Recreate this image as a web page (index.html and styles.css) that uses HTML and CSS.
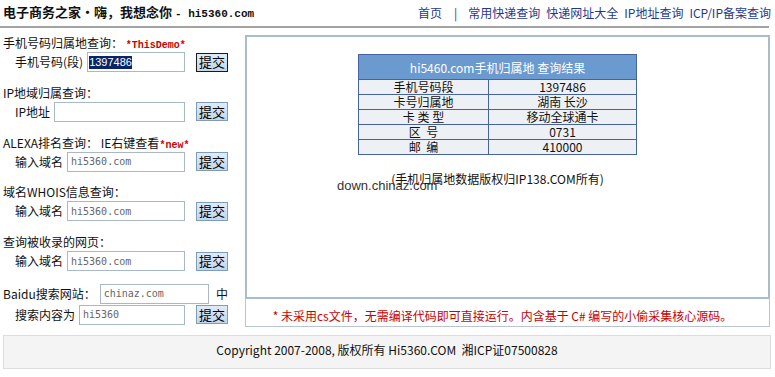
FILE: index.html
```html
<!DOCTYPE html>
<html lang="zh-CN">
<head>
    <meta charset="UTF-8">
    <title>电子商务之家 - hi5360.com</title>
    <link rel="stylesheet" href="styles.css">
</head>
<body>
    <div class="top">
        <div class="logo">电子商务之家・嗨，我想念你 <span class="mono big">- hi5360.com</span></div>
        <div class="nav">
            <a href="#">首页</a>
            <span class="sep">|</span>
            <a href="#">常用快递查询</a>
            <a href="#">快递网址大全</a>
            <a href="#">IP地址查询</a>
            <a href="#">ICP/IP备案查询</a>
        </div>
    </div>

    <div class="main">
        <div class="left">
            <div class="grp">
                <div class="tit">手机号码归属地查询： <span class="red mono bold">*ThisDemo*</span></div>
                <div class="row">
                    <label>手机号码(段)</label>
                    <span class="inp"><span class="sel">1397486</span></span>
                    <button class="btn on">提交</button>
                </div>
            </div>
            <div class="grp">
                <div class="tit">IP地域归属查询：</div>
                <div class="row">
                    <label>IP地址</label>
                    <input class="inp" type="text">
                    <button class="btn">提交</button>
                </div>
            </div>
            <div class="grp">
                <div class="tit">ALEXA排名查询： IE右键查看<span class="red mono bold">*new*</span></div>
                <div class="row">
                    <label>输入域名</label>
                    <input class="inp val" type="text" value="hi5360.com">
                    <button class="btn">提交</button>
                </div>
            </div>
            <div class="grp">
                <div class="tit">域名WHOIS信息查询：</div>
                <div class="row">
                    <label>输入域名</label>
                    <input class="inp val" type="text" value="hi5360.com">
                    <button class="btn">提交</button>
                </div>
            </div>
            <div class="grp">
                <div class="tit">查询被收录的网页：</div>
                <div class="row">
                    <label>输入域名</label>
                    <input class="inp val" type="text" value="hi5360.com">
                    <button class="btn">提交</button>
                </div>
            </div>
            <div class="baidu">
                <div class="row wide">
                    <label>Baidu搜索网站：</label>
                    <input class="inp val" type="text" value="chinaz.com">
                    <span class="zh">中</span>
                </div>
                <div class="row">
                    <label>搜索内容为</label>
                    <input class="inp val" type="text" value="hi5360">
                    <button class="btn">提交</button>
                </div>
            </div>
        </div>

        <div class="right">
            <div class="result">
                <table class="tb">
                    <tr><th colspan="2">hi5460.com手机归属地 查询结果</th></tr>
                    <tr><td class="k">手机号码段</td><td>1397486</td></tr>
                    <tr><td class="k">卡号归属地</td><td>湖南 长沙</td></tr>
                    <tr><td class="k">卡 类 型</td><td>移动全球通卡</td></tr>
                    <tr><td class="k">区&nbsp;&nbsp;号</td><td>0731</td></tr>
                    <tr><td class="k">邮&nbsp;&nbsp;编</td><td>410000</td></tr>
                </table>
                <p class="src">(手机归属地数据版权归IP138.COM所有)</p>
                <span class="mark">down.chinaz.com</span>
            </div>
            <div class="note">* 未采用cs文件，无需编译代码即可直接运行。内含基于 C# 编写的小偷采集核心源码。</div>
        </div>
    </div>

    <div class="foot">Copyright 2007-2008, 版权所有 Hi5360.COM &nbsp;湘ICP证07500828</div>
</body>
</html>
```

FILE: styles.css
```css
body
{
    margin: 0;
    font-family: "Noto Sans CJK SC", sans-serif;
    font-size: 12px;
    color: #111;
    background: #fff;
}

.mono
{
    font-family: "Liberation Mono", "Noto Sans CJK SC", monospace;
    font-size: 10px;
}
.bold { font-weight: bold; }
.red { color: #c00; }

/* header */
.top
{
    display: flex;
    justify-content: space-between;
    align-items: center;
    height: 28px;
    width: 769px;
    padding-left: 3px;
    box-sizing: border-box;
    border-bottom: 2px solid #a3a3a3;
}
.logo
{
    font-size: 13px;
    font-weight: bold;
    line-height: 16px;
}
.logo .big
{
    font-size: 11px;
}
.nav
{
    display: flex;
    gap: 6px;
    line-height: 16px;
    margin-right: -2px;
}
.nav a
{
    color: #1f3a8c;
    text-decoration: none;
}
.nav .sep
{
    color: #1f3a8c;
    margin: 0 5px 0 6px;
}

/* main part */
.main
{
    display: flex;
    align-items: flex-start;
}
.left
{
    width: 245px;
    flex: none;
    padding: 7px 0 0 3px;
    box-sizing: border-box;
}
.grp
{
    margin-bottom: 12.75px;
}
.tit
{
    line-height: 16px;
    height: 16px;
}
.row
{
    display: flex;
    align-items: center;
    height: 20px;
    width: 213px;
    margin: 1px 0 0 12px;
}
.row label
{
    flex: none;
    line-height: 16px;
    margin-right: 4px;
}
.row.wide
{
    width: 225px;
    margin-left: 0;
}
.inp
{
    flex: 1;
    min-width: 0;
    height: 20px;
    box-sizing: border-box;
    border: 1px solid #a9b8c6;
    background: #fff;
    padding: 0 3px;
    color: #666;
    display: flex;
    align-items: center;
}
.val
{
    font-family: "DejaVu Sans Mono", monospace;
    font-size: 10px;
}
.sel
{
    font-family: "Liberation Sans", sans-serif;
    font-size: 11px;
    line-height: 13px;
    background: #0a246a;
    color: #fff;
    margin-left: -2px;
}
.btn
{
    flex: none;
    width: 32px;
    height: 19px;
    margin-left: 11px;
    padding: 0;
    border: 1px solid #7f9db9;
    background: linear-gradient(#e0ebf8, #c1d6ee);
    font-family: "Noto Sans CJK SC", sans-serif;
    font-size: 13px;
    line-height: 16px;
    color: #000;
}
.btn.on
{
    border-color: #1a1a1a;
}
.baidu
{
    margin-top: 11px;
}
.zh
{
    margin-left: 7px;
    font-size: 12px;
}

/* right panel */
.right
{
    width: 525px;
    margin-top: 7px;
}
.result
{
    position: relative;
    height: 264px;
    box-sizing: border-box;
    border: 2px solid #a8bccb;
    padding: 17px 20px 0 0;
}
.tb
{
    width: 279px;
    margin: 0 auto;
    border-collapse: collapse;
    border: 1px solid #45639e;
}
.tb th
{
    height: 24px;
    padding: 0;
    background: #6b9ad0;
    color: #fff;
    font-weight: normal;
    border: 1px solid #45639e;
}
.tb td
{
    height: 14px;
    padding: 0;
    line-height: 14px;
    text-align: center;
    background: #edf1f6;
    border: 1px solid #45639e;
}
.tb td.k
{
    width: 129px;
}
.src
{
    margin: 16px 0 0 0;
    line-height: 16px;
    text-align: center;
}
.mark
{
    position: absolute;
    left: 90px;
    top: 141px;
    font-family: "Liberation Sans", sans-serif;
    font-size: 13px;
    color: #333;
}
.note
{
    height: 28px;
    box-sizing: border-box;
    border: 1px solid #b9c6d1;
    border-top: none;
    padding: 9px 10px 0 0;
    line-height: 16px;
    text-align: center;
    color: #c00;
}

/* footer */
.foot
{
    width: 768px;
    height: 34px;
    margin: 8px 0 0 3px;
    box-sizing: border-box;
    border: 1px solid #dcdcdc;
    background: #f4f4f4;
    padding-top: 6px;
    line-height: 16px;
    text-align: center;
    font-size: 12px;
}
```
